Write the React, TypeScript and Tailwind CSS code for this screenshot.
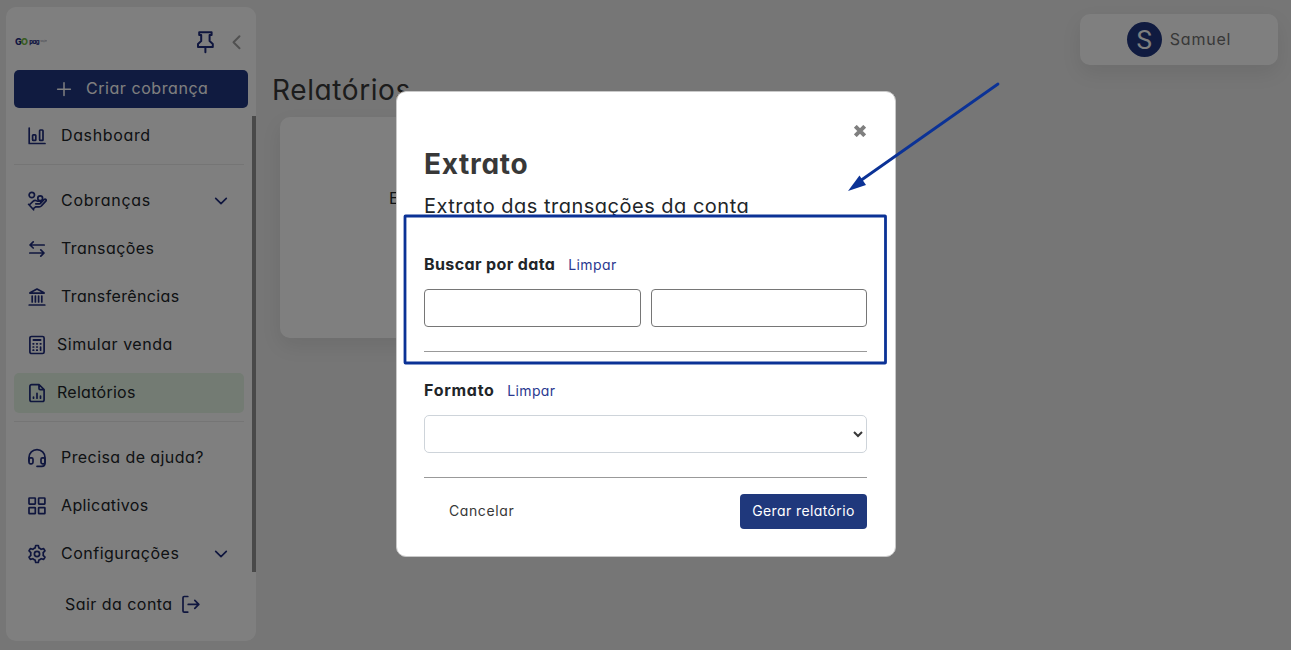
import type { ReactNode } from "react";

type IconProps = { children: ReactNode; className?: string };

function Icon({ children, className = "h-5 w-5" }: IconProps) {
  return (
    <svg
      viewBox="0 0 20 20"
      className={`shrink-0 ${className}`}
      fill="none"
      stroke="currentColor"
      strokeWidth="1.7"
      strokeLinecap="round"
      strokeLinejoin="round"
      aria-hidden="true"
    >
      {children}
    </svg>
  );
}

const DashboardIcon = () => (
  <Icon>
    <path d="M2.2 2v15.5H18" />
    <rect x="5.6" y="8.8" width="3.2" height="5.6" rx="0.7" />
    <rect x="12.6" y="4" width="3.4" height="10.4" rx="0.7" />
  </Icon>
);

const HandCoinsIcon = () => (
  <Icon>
    <circle cx="4.8" cy="4" r="2.7" />
    <circle cx="13.2" cy="7.3" r="2.4" />
    <path d="M1.6 13.3 6.6 18.8M2.8 13.5 6 10.4C7 9.4 8.3 9.1 9.5 9.7L10.8 10.2H12.6a1.3 1.3 0 0 1 0 2.6H8.8M13.2 12.6 17 8.6c1.5-1.2 2.8.3 1.8 1.6l-4.2 4.5c-.7.8-1.4 1.2-2.5 1.2H8.6L6 17.9" />
  </Icon>
);

const TransferIcon = () => (
  <Icon>
    <path d="M17.2 6H3.2M6.2 2.8 3 6l3.2 3M2.8 14h14M13.8 10.9 17 14l-3.2 3.2" />
  </Icon>
);

const BankIcon = () => (
  <Icon>
    <path d="M3 5.8 10 2l7 3.8v.4H3zM5.2 9v6M8.4 9v6M11.6 9v6M14.8 9v6M2.2 18h15.6" />
  </Icon>
);

const CalculatorIcon = () => (
  <Icon>
    <rect x="2.9" y="1.5" width="14.2" height="17" rx="1.6" />
    <path d="M6.4 5h7.2" strokeWidth="1.8" />
    <path d="M6.1 8.8h.6M9.7 8.8h.6M13.3 8.8h.6M6.1 12h.6M9.7 12h.6M6.1 15.2h.6M9.7 15.2h.6M13.6 12v3.2" />
  </Icon>
);

const ReportIcon = () => (
  <Icon>
    <path d="M12 1.7H4.6A1.7 1.7 0 0 0 2.9 3.4v13.4a1.7 1.7 0 0 0 1.7 1.7h10.8a1.7 1.7 0 0 0 1.7-1.7V6.5zM12 1.9v3.5q0 1.2 1.2 1.2H17M6.5 14v1.2M10 10.3v4.9M13.5 13v2.2" />
  </Icon>
);

const HeadsetIcon = () => (
  <Icon>
    <path d="M2 13V9.6a8 8 0 0 1 16 0V13M18 13v2.2a3.2 3.2 0 0 1-3.2 3.1H10" />
    <rect x="2" y="9.8" width="4" height="6" rx="1.5" />
    <rect x="14" y="9.8" width="4" height="6" rx="1.5" />
  </Icon>
);

const GridIcon = () => (
  <Icon>
    <rect x="2" y="2" width="6.3" height="6.1" rx="0.5" />
    <rect x="11.6" y="2" width="6.3" height="6.1" rx="0.5" />
    <rect x="2" y="11.6" width="6.3" height="6.1" rx="0.5" />
    <rect x="11.6" y="11.6" width="6.3" height="6.1" rx="0.5" />
  </Icon>
);

const GearIcon = () => (
  <Icon>
    <circle cx="10" cy="10" r="2.6" />
    <path d="M8.15 3.9 8.7 1.5h2.6l.55 2.4a6.4 6.4 0 0 1 2.4 1.4l2.4-.7 1.3 2.2-1.8 1.8a6.4 6.4 0 0 1 0 2.8l1.8 1.8-1.3 2.2-2.4-.7a6.4 6.4 0 0 1-2.4 1.4l-.55 2.4H8.7l-.55-2.4a6.4 6.4 0 0 1-2.4-1.4l-2.4.7-1.3-2.2 1.8-1.8a6.4 6.4 0 0 1 0-2.8L2.05 6.8l1.3-2.2 2.4.7a6.4 6.4 0 0 1 2.4-1.4z" />
  </Icon>
);

const LogoutIcon = () => (
  <Icon>
    <path d="M6.8 2.5H3.2A1.2 1.2 0 0 0 2 3.7v13.2a1.2 1.2 0 0 0 1.2 1.2h3.6M7.2 10.4h10.6M13.8 6.4l4 4-4 4" />
  </Icon>
);

const ChevronDown = () => (
  <Icon className="h-5 w-5">
    <path d="m4.7 7.4 5.3 5.2 5.3-5.2" />
  </Icon>
);

function NavItem(props: {
  icon: ReactNode;
  label: string;
  text: string;
  active?: boolean;
  expandable?: boolean;
}) {
  return (
    <a
      className={`flex h-10 shrink-0 items-center rounded-[5px] pl-[13px] pr-[13px] text-[#1f2c7c] ${
        props.active ? "bg-[#e6f7e6]" : ""
      }`}
    >
      {props.icon}
      <span className={`whitespace-nowrap pb-0.5 text-base leading-6 text-[#212529] ${props.text}`}>{props.label}</span>
      {props.expandable && (
        <span className="ml-auto">
          <ChevronDown />
        </span>
      )}
    </a>
  );
}

function Sidebar() {
  return (
    <aside className="flex w-[250px] shrink-0 flex-col rounded-[10px] bg-white">
      <div className="flex h-[63px] shrink-0 items-center pl-[9px] pr-[9px] pt-[7px]">
        <div className="flex h-3 w-8 items-center overflow-hidden pb-px text-[9px] font-extrabold leading-3 text-[#263185]">
          <span className="tracking-[-0.8px]">
            G<span className="text-[#74b944]">O</span>
          </span>
          <span className="ml-[2px] text-[6px] tracking-[-0.5px]">pag</span>
          <span className="ml-px text-[2px] font-normal leading-[3px] tracking-[-0.2px] text-[#8d93a8]">soluções</span>
        </div>
        <svg
          viewBox="0 0 20 24"
          className="ml-auto h-6 w-5 text-[#1f2c7c]"
          fill="none"
          stroke="currentColor"
          strokeWidth="2"
          strokeLinejoin="round"
          strokeLinecap="round"
        >
          <path d="M4.2 2.2h12.4v2.9h-2v6l3.2 2.8v3H3v-3l3.2-2.8v-6h-2zM10.4 17v5.2" />
        </svg>
        <svg
          viewBox="0 0 20 20"
          className="ml-[12px] h-5 w-5 text-[#a2a2a2]"
          fill="none"
          stroke="currentColor"
          strokeWidth="2"
          strokeLinecap="round"
          strokeLinejoin="round"
        >
          <path d="M12.5 4.3 6.5 10.3l6 6" />
        </svg>
      </div>
      <button className="mx-2 flex h-[38px] shrink-0 items-center rounded-[5px] bg-[#203680] pl-10 text-white">
        <Icon className="h-5 w-5 [stroke-width:1.5]">
          <path d="M10 3.8v12.8M3.6 10.2h12.8" />
        </Icon>
        <span className="ml-3 whitespace-nowrap pb-0.5 text-base leading-6 tracking-[0.56px]">Criar cobrança</span>
      </button>
      <div className="mt-2 flex h-[456px] shrink-0 overflow-hidden">
        <nav className="flex w-[238px] flex-col pl-2">
          <NavItem icon={<DashboardIcon />} label="Dashboard" text="ml-[14px] tracking-[0.64px]" />
          <hr className="mb-4 mt-2 border-[#ebebeb]" />
          <div className="flex flex-col gap-2">
            <NavItem icon={<HandCoinsIcon />} label="Cobranças" text="ml-[14px] tracking-[0.72px]" expandable />
            <NavItem icon={<TransferIcon />} label="Transações" text="ml-[14px] tracking-[0.42px]" />
            <NavItem icon={<BankIcon />} label="Transferências" text="ml-[14px] tracking-[0.36px]" />
            <NavItem icon={<CalculatorIcon />} label="Simular venda" text="ml-[10px] tracking-[0.54px]" />
            <NavItem icon={<ReportIcon />} label="Relatórios" text="ml-[10px] tracking-[0.28px]" active />
          </div>
          <hr className="mb-4 mt-2 border-[#ebebeb]" />
          <div className="flex flex-col gap-2">
            <NavItem icon={<HeadsetIcon />} label="Precisa de ajuda?" text="ml-[14px] tracking-[0.42px]" />
            <NavItem icon={<GridIcon />} label="Aplicativos" text="ml-[14px] tracking-[0.38px]" />
            <NavItem icon={<GearIcon />} label="Configurações" text="ml-[14px] tracking-[0.5px]" expandable />
          </div>
        </nav>
        <div className="ml-auto w-1 bg-[#929292]" />
      </div>
      <a className="mt-5 flex h-6 items-center pl-[59px] text-base leading-6 text-[#212529]">
        <span className="whitespace-nowrap tracking-[0.46px]">Sair da conta</span>
        <span className="ml-2 text-[#1f2c7c]">
          <LogoutIcon />
        </span>
      </a>
    </aside>
  );
}

function Modal() {
  return (
    <section
      role="dialog"
      className="flex h-[466px] w-[500px] flex-col rounded-[10px] border border-[#c9c9c9] bg-white pl-[27px] pr-[28px]"
    >
      <button className="ml-auto mr-[1px] mt-[33px] h-3 w-3 shrink-0 text-[#7f7f7f]" aria-label="Fechar">
        <svg viewBox="0 0 12 12" className="h-3 w-3" stroke="currentColor" strokeWidth="4">
          <path d="m1.3 1.3 9.4 9.4M10.7 1.3l-9.4 9.4" />
        </svg>
      </button>
      <h2 className="mt-[10px] whitespace-nowrap text-[28px] font-bold leading-[34px] tracking-[0.7px] text-[#383838]">
        Extrato
      </h2>
      <h3 className="mt-[13px] whitespace-nowrap text-[20px] leading-6 tracking-[0.5px] text-[#212529]">
        Extrato das transações da conta
      </h3>
      <div className="mt-[35px] flex h-6 items-center">
        <strong className="whitespace-nowrap pb-0.5 text-base font-bold leading-6 tracking-[0.38px] text-[#212529]">
          Buscar por data
        </strong>
        <a className="ml-[13px] text-sm leading-5 tracking-[0.4px] text-[#2b3990]">Limpar</a>
      </div>
      <div className="mt-3 flex gap-[10px]">
        <input className="h-[38px] min-w-0 flex-1 rounded-[4px] border border-[#767676]" />
        <input className="h-[38px] min-w-0 flex-1 rounded-[4px] border border-[#767676]" />
      </div>
      <hr className="mt-6 border-[#999999]" />
      <div className="mt-[27px] flex h-6 items-center">
        <strong className="whitespace-nowrap pb-0.5 text-base font-bold leading-6 tracking-[0.72px] text-[#212529]">
          Formato
        </strong>
        <a className="ml-[12.5px] text-sm leading-5 tracking-[0.4px] text-[#2b3990]">Limpar</a>
      </div>
      <select className="mt-3 h-[38px] w-full rounded-[5px] border border-[#ced4da] bg-white text-[#383838]" />
      <hr className="mt-6 border-[#999999]" />
      <div className="mt-4 flex h-[35px] items-center justify-between">
        <button className="ml-[25px] pb-0.5 text-sm leading-5 tracking-[0.6px] text-[#383838]">Cancelar</button>
        <button className="h-[35px] w-[127px] whitespace-nowrap rounded-[4px] bg-[#1f387c] pb-0.5 text-sm leading-5 tracking-[0.4px] text-white">
          Gerar relatório
        </button>
      </div>
    </section>
  );
}

export default function App() {
  return (
    <div className="relative h-[650px] w-full overflow-hidden bg-[#ececec] font-['Inter','Open_Sans',sans-serif] [font-feature-settings:'cv11']">
      <div className="flex h-full pb-[9px] pl-[6px] pt-[7px]">
        <Sidebar />
        <main className="flex flex-1 flex-col pl-4 pr-[13px] pt-[7px]">
          <div className="ml-auto flex h-[51px] w-[198px] shrink-0 items-center justify-center rounded-[10px] bg-white shadow-[0_8px_20px_rgba(0,0,0,0.08)]">
            <span className="flex h-[35px] w-[35px] items-center justify-center rounded-full bg-[#203680] font-['Roboto',sans-serif] text-[26px] leading-none text-white">
              S
            </span>
            <span className="ml-2 pb-0.5 text-base leading-6 tracking-[0.8px] text-[#707070]">Samuel</span>
          </div>
          <h1 className="mt-2 text-[28px] leading-[34px] tracking-[0.6px] text-[#383838]">Relatórios</h1>
          <div className="ml-2 mt-[10px] flex h-[221px] w-[260px] rounded-[10px] bg-white pl-[109px] pt-[69px] text-base leading-6 text-[#212529] shadow-[0_8px_20px_rgba(0,0,0,0.08)]">
            Extrato
          </div>
        </main>
      </div>
      <div className="absolute inset-0 flex items-start justify-center bg-black/50 pl-px pt-[91px]">
        <Modal />
      </div>
      <svg viewBox="0 0 1291 650" className="pointer-events-none absolute left-0 top-0 h-[650px] w-[1291px]" fill="none">
        <rect x="405" y="216" width="480.5" height="147" rx="0.5" stroke="#0b3296" strokeWidth="2.8" />
        <path d="M998 84 860 181" stroke="#0b3296" strokeWidth="2.8" strokeLinecap="round" />
        <path d="m848 191 11.5-15.5 6.5 9.5z" fill="#0b3296" />
      </svg>
    </div>
  );
}
